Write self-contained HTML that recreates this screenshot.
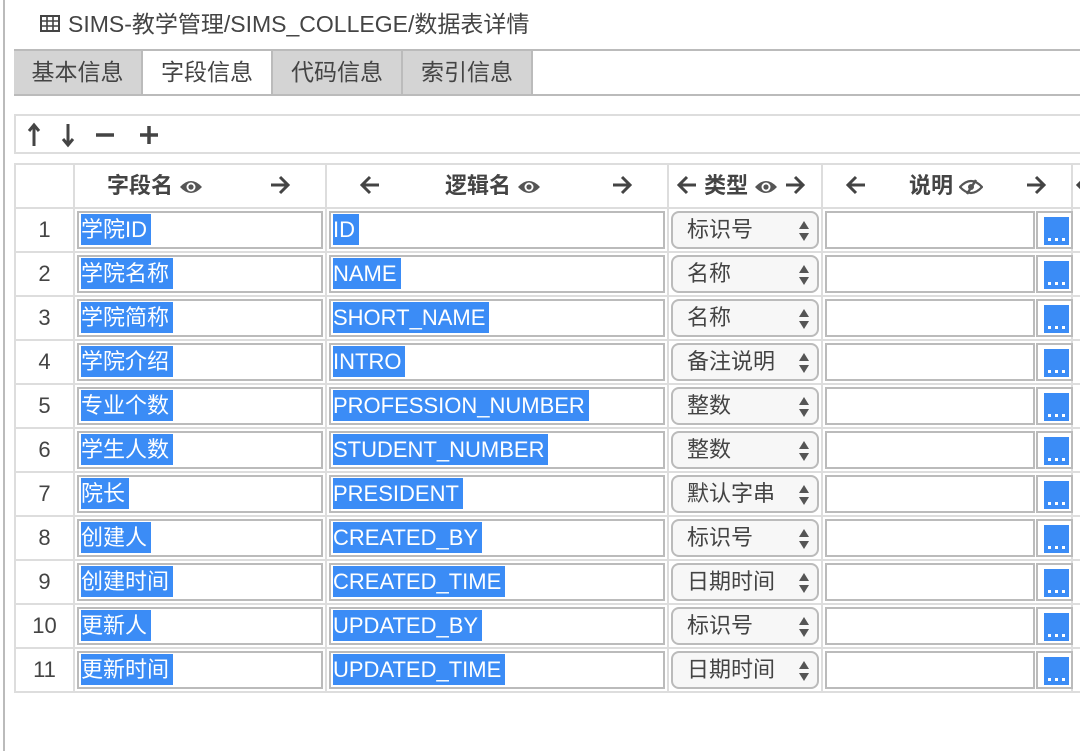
<!DOCTYPE html>
<html><head><meta charset="utf-8"><style>
*{box-sizing:border-box;margin:0;padding:0}
body{width:1080px;height:751px;background:#fff;position:relative;overflow:hidden;font-family:"Liberation Sans","Noto Sans CJK SC",sans-serif;color:#444}
.vl{position:absolute;left:3px;top:0;width:2px;height:751px;background:#bbb}
.title{position:absolute;left:40px;top:8px;font-size:23px;line-height:32px;color:#444}
.tabs{position:absolute;left:14px;top:49px;width:1080px;height:47px;border-top:2px solid #bbb;border-bottom:2px solid #bbb}
.tab{position:absolute;top:0;height:43px;font-size:23px;line-height:43px;text-align:center;background:#d4d4d4;border-right:2px solid #bbb;color:#444}
.tool{position:absolute;left:14px;top:114px;width:1080px;height:40px;border:2px solid #ddd}
table{position:absolute;left:14px;top:163px;border-collapse:collapse;table-layout:fixed;width:1110px}
td,th{border:2px solid #ddd;height:44px;padding:0;vertical-align:middle}
th{font-size:22px;font-weight:bold;color:#444;position:relative}
td.n{text-align:center;font-size:22px;color:#444}
.in{margin:0 2px;height:38px;border:2px solid #bbb;padding-left:2px;font-size:22px;line-height:34px;white-space:nowrap;overflow:hidden}
.in span{background:#3b8cf6;color:#fff;padding:3px 4px 3px 0}
.sel{margin:0 2px;height:38px;border:2px solid #bbb;border-radius:8px;background:#f7f7f7;font-size:22px;line-height:34px;padding-left:14px;position:relative}
.sel:after{content:"";position:absolute;right:8px;top:8px;border:5px solid transparent;border-bottom:8px solid #555;border-top:0}
.sel:before{content:"";position:absolute;right:8px;top:20px;border:5px solid transparent;border-top:8px solid #555;border-bottom:0}
.dsc{position:absolute;left:2px;top:2px;width:210px;height:38px;border:2px solid #bbb}
.btn{position:absolute;left:213px;top:2px;width:37px;height:38px;border:2px solid #bbb}
.btn i{position:absolute;left:6px;top:4px;width:25px;height:28px;background:#3b8cf6}
.btn i:after{content:"";position:absolute;left:4px;top:21px;width:3px;height:3px;background:#fff;box-shadow:7px 0 #fff,14px 0 #fff}
td.d{position:relative}
.h{position:absolute;top:0;line-height:42px;white-space:nowrap}
.h svg{vertical-align:-2px}
</style></head><body>
<div class="vl"></div>
<div class="title"><svg width="20" height="18" viewBox="0 0 20 18" style="vertical-align:-1px;margin-right:8px"><rect x="1" y="1" width="18" height="15" fill="none" stroke="#444" stroke-width="2"/><path d="M1 6H19M1 11H19M7 1V16M13 1V16" stroke="#444" stroke-width="1.6"/></svg>SIMS-教学管理/SIMS_COLLEGE/数据表详情</div>
<div class="tabs">
<div class="tab" style="left:0;width:129px">基本信息</div>
<div class="tab" style="left:129px;width:130px;background:#fff">字段信息</div>
<div class="tab" style="left:259px;width:130px">代码信息</div>
<div class="tab" style="left:389px;width:130px">索引信息</div>
</div>
<div class="tool"><svg width="140" height="30" viewBox="0 0 140 30" style="position:absolute;left:8px;top:4px"><path d="M10 6V26M5 11L10 5L15 11" stroke="#444" stroke-width="3" fill="none"/><path d="M44 4V24M39 19L44 25L49 19" stroke="#444" stroke-width="3" fill="none"/><path d="M72 15H90" stroke="#444" stroke-width="3.5"/><path d="M116 15H134M125 6V24" stroke="#444" stroke-width="3.5"/></svg></div>
<svg width="0" height="0" style="position:absolute"><defs>
<symbol id="ra" viewBox="0 0 22 20"><path d="M2 10H19M11 2L19 10L11 18" stroke="#444" stroke-width="3" fill="none"/></symbol>
<symbol id="la" viewBox="0 0 22 20"><path d="M20 10H3M11 2L3 10L11 18" stroke="#444" stroke-width="3" fill="none"/></symbol>
<symbol id="eye" viewBox="0 0 24 16"><path d="M1 8Q12 -4 23 8Q12 20 1 8Z" fill="#555"/><circle cx="12" cy="8" r="4.5" fill="#fff"/><circle cx="12" cy="8" r="2.6" fill="#555"/></symbol>
<symbol id="eyex" viewBox="0 0 24 16"><path d="M1 8Q12 -4 23 8Q12 20 1 8Z" fill="none" stroke="#555" stroke-width="2.2"/><circle cx="12" cy="8" r="3" fill="#555"/><path d="M8 15L17 1" stroke="#555" stroke-width="2.5"/></symbol>
</defs></svg>
<table>
<colgroup><col style="width:59px"><col style="width:252px"><col style="width:342px"><col style="width:154px"><col style="width:250px"><col style="width:53px"></colgroup>
<tr><th></th>
<th><span class="h" style="left:32px">字段名 <svg width="24" height="16"><use href="#eye"/></svg></span><span class="h" style="left:194px"><svg width="22" height="20"><use href="#ra"/></svg></span></th>
<th><span class="h" style="left:32px"><svg width="22" height="20"><use href="#la"/></svg></span><span class="h" style="left:118px">逻辑名 <svg width="24" height="16"><use href="#eye"/></svg></span><span class="h" style="left:284px"><svg width="22" height="20"><use href="#ra"/></svg></span></th>
<th><span class="h" style="left:7px"><svg width="22" height="20"><use href="#la"/></svg> 类型 <svg width="24" height="16"><use href="#eye"/></svg> <svg width="22" height="20"><use href="#ra"/></svg></span></th>
<th><span class="h" style="left:22px"><svg width="22" height="20"><use href="#la"/></svg></span><span class="h" style="left:86px">说明 <svg width="24" height="16"><use href="#eyex"/></svg></span><span class="h" style="left:202px"><svg width="22" height="20"><use href="#ra"/></svg></span></th>
<th><span class="h" style="left:2px"><svg width="22" height="20"><use href="#la"/></svg></span></th></tr>
<tr><td class="n">1</td><td><div class="in"><span>学院ID</span></div></td><td><div class="in"><span>ID</span></div></td><td><div class="sel">标识号</div></td><td class="d"><div class="dsc"></div><div class="btn"><i></i></div></td><td></td></tr>
<tr><td class="n">2</td><td><div class="in"><span>学院名称</span></div></td><td><div class="in"><span>NAME</span></div></td><td><div class="sel">名称</div></td><td class="d"><div class="dsc"></div><div class="btn"><i></i></div></td><td></td></tr>
<tr><td class="n">3</td><td><div class="in"><span>学院简称</span></div></td><td><div class="in"><span>SHORT_NAME</span></div></td><td><div class="sel">名称</div></td><td class="d"><div class="dsc"></div><div class="btn"><i></i></div></td><td></td></tr>
<tr><td class="n">4</td><td><div class="in"><span>学院介绍</span></div></td><td><div class="in"><span>INTRO</span></div></td><td><div class="sel">备注说明</div></td><td class="d"><div class="dsc"></div><div class="btn"><i></i></div></td><td></td></tr>
<tr><td class="n">5</td><td><div class="in"><span>专业个数</span></div></td><td><div class="in"><span>PROFESSION_NUMBER</span></div></td><td><div class="sel">整数</div></td><td class="d"><div class="dsc"></div><div class="btn"><i></i></div></td><td></td></tr>
<tr><td class="n">6</td><td><div class="in"><span>学生人数</span></div></td><td><div class="in"><span>STUDENT_NUMBER</span></div></td><td><div class="sel">整数</div></td><td class="d"><div class="dsc"></div><div class="btn"><i></i></div></td><td></td></tr>
<tr><td class="n">7</td><td><div class="in"><span>院长</span></div></td><td><div class="in"><span>PRESIDENT</span></div></td><td><div class="sel">默认字串</div></td><td class="d"><div class="dsc"></div><div class="btn"><i></i></div></td><td></td></tr>
<tr><td class="n">8</td><td><div class="in"><span>创建人</span></div></td><td><div class="in"><span>CREATED_BY</span></div></td><td><div class="sel">标识号</div></td><td class="d"><div class="dsc"></div><div class="btn"><i></i></div></td><td></td></tr>
<tr><td class="n">9</td><td><div class="in"><span>创建时间</span></div></td><td><div class="in"><span>CREATED_TIME</span></div></td><td><div class="sel">日期时间</div></td><td class="d"><div class="dsc"></div><div class="btn"><i></i></div></td><td></td></tr>
<tr><td class="n">10</td><td><div class="in"><span>更新人</span></div></td><td><div class="in"><span>UPDATED_BY</span></div></td><td><div class="sel">标识号</div></td><td class="d"><div class="dsc"></div><div class="btn"><i></i></div></td><td></td></tr>
<tr><td class="n">11</td><td><div class="in"><span>更新时间</span></div></td><td><div class="in"><span>UPDATED_TIME</span></div></td><td><div class="sel">日期时间</div></td><td class="d"><div class="dsc"></div><div class="btn"><i></i></div></td><td></td></tr>
</table>
</body></html>
